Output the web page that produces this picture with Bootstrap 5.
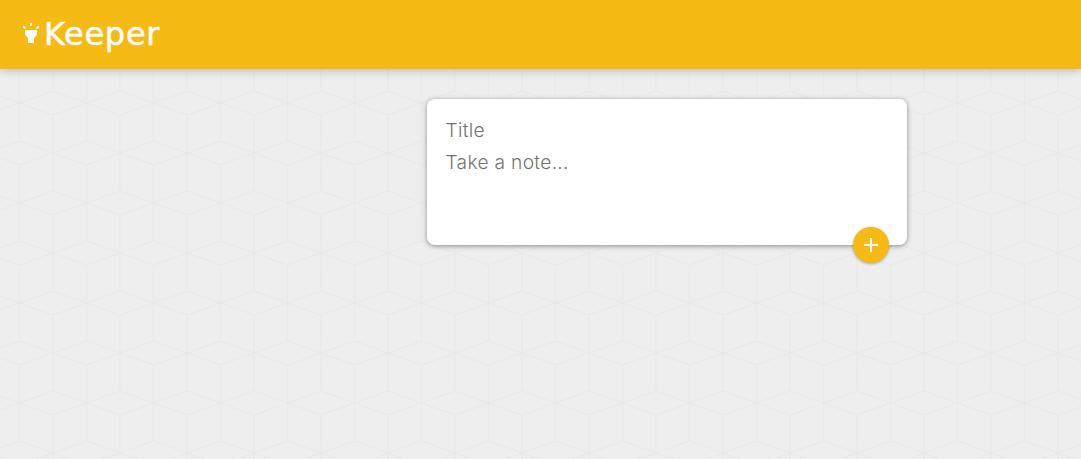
<!DOCTYPE html>
<html lang="en">
<head>
  <meta charset="UTF-8" />
  <meta name="viewport" content="width=device-width, initial-scale=1.0"/>
  <title>Keeper</title>
  <link href="https://cdn.jsdelivr.net/npm/bootstrap@5.3.3/dist/css/bootstrap.min.css" rel="stylesheet" />
  <style>
    html, body { height: 100%; }
    body {
      background-color: #eeeeee;
      background-image: url("data:image/svg+xml,%3Csvg xmlns='http://www.w3.org/2000/svg' width='67' height='100'%3E%3Cpath fill='none' stroke='%23e9e9e9' stroke-width='1.3' d='M19.5 3L53 -9L86.5 3L53 15ZM19.5 103L53 91L86.5 103L53 115ZM-14 53L19.5 41L53 53L19.5 65ZM53 53L86.5 41L120 53L86.5 65ZM-47.5 3L-14 -9L19.5 3L-14 15ZM-47.5 103L-14 91L19.5 103L-14 115ZM53 15V91M19.5 65V141M19.5 -35V41'/%3E%3C/svg%3E");
      overflow: hidden;
    }
    .keeper-bar {
      background-color: #f5ba13;
      height: 69px;
      padding: 0 0 2px 19px;
      box-shadow: 0 0 10px 0 rgba(0, 0, 0, 0.3);
    }
    .keeper-logo {
      font-family: "DejaVu Sans", sans-serif;
      font-size: 32px;
      letter-spacing: 0.7px;
      -webkit-text-stroke: 0.5px #fff;
      line-height: 1;
      color: #fff;
      margin: 0;
    }
    .keeper-logo svg { width: 24px; height: 24px; fill: #fff; margin-right: 1px; vertical-align: 0; }
    .note-form {
      width: 480px;
      height: 146px;
      margin: 30px 0 0 427px;
      padding: 15px 18.5px;
      border: 0;
      border-radius: 7.5px;
      box-shadow: 0 1px 5px #8a8989;
    }
    .note-form input, .note-form textarea {
      display: block;
      width: 100%;
      padding: 4px 0;
      border: 0;
      outline: none;
      resize: none;
      font-family: "Inter", sans-serif;
      font-size: 19.2px;
      font-weight: 300;
      letter-spacing: 0.3px;
      line-height: 24px;
      color: #757575;
    }
    .note-form input::placeholder, .note-form textarea::placeholder { color: #757575; opacity: 1; }
    .add-btn {
      position: absolute;
      right: 18px;
      bottom: -18px;
      width: 36px;
      height: 36px;
      padding: 0;
      border: 0;
      background-color: #f5ba13;
      box-shadow: 0 1px 3px rgba(0, 0, 0, 0.3);
    }
    .add-btn svg { width: 24px; height: 24px; fill: #fff; display: block; margin: auto; }
  </style>
</head>
<body>
  <header class="keeper-bar d-flex align-items-center">
    <h1 class="keeper-logo fw-normal">
      <svg viewBox="0 0 24 24"><path d="M6 14l3 3v5h6v-5l3-3V9H6zm5-12h2v3h-2zM3.5 5.875L4.914 4.46l2.12 2.122L5.62 7.997zm13.46.71l2.123-2.12 1.414 1.414L18.375 8z"/></svg>Keeper
    </h1>
  </header>

  <form class="note-form card bg-white">
    <input type="text" name="title" placeholder="Title" />
    <textarea name="content" rows="3" placeholder="Take a note..."></textarea>
    <button type="button" class="add-btn btn rounded-circle">
      <svg viewBox="0 0 24 24"><path d="M19 13h-6v6h-2v-6H5v-2h6V5h2v6h6v2z"/></svg>
    </button>
  </form>

  <script src="https://cdn.jsdelivr.net/npm/bootstrap@5.3.3/dist/js/bootstrap.bundle.min.js"></script>
</body>
</html>
